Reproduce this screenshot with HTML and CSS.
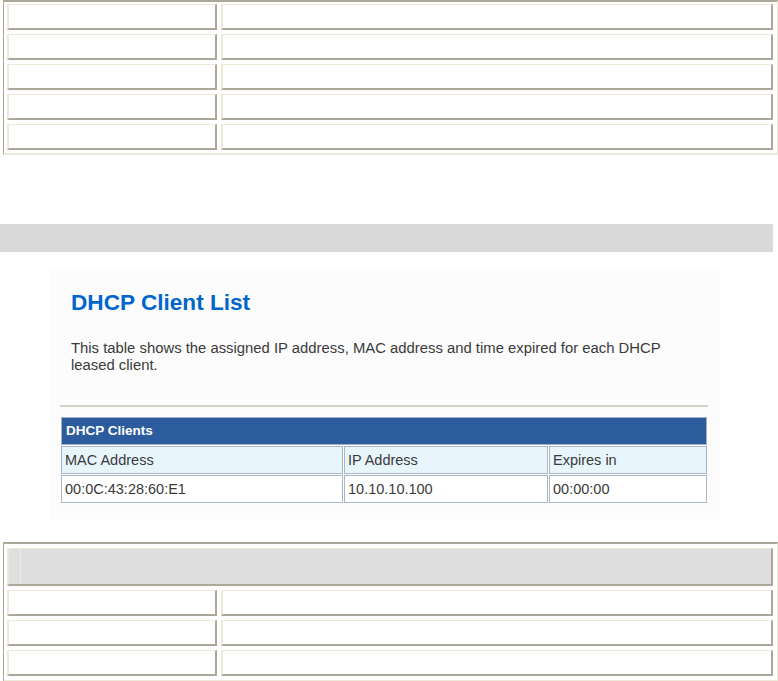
FILE: index.html
```html
<!DOCTYPE html>
<html>
<head>
<meta charset="utf-8">
<link rel="stylesheet" href="styles.css">
</head>
<body>
<div class="page">
  <div class="frame frame-top">
    <div class="cell"></div><div class="cell"></div>
    <div class="cell"></div><div class="cell"></div>
    <div class="cell"></div><div class="cell"></div>
    <div class="cell"></div><div class="cell"></div>
    <div class="cell"></div><div class="cell"></div>
  </div>

  <div class="bar"></div>

  <div class="shot">
    <h1 class="title">DHCP Client List</h1>
    <p class="desc">This table shows the assigned IP address, MAC address and time expired for each DHCP leased client.</p>
    <div class="rule"></div>
    <div class="clients">
      <div class="c-head">DHCP Clients</div>
      <div class="c-label">MAC Address</div>
      <div class="c-label">IP Address</div>
      <div class="c-label">Expires in</div>
      <div class="c-val">00:0C:43:28:60:E1</div>
      <div class="c-val">10.10.10.100</div>
      <div class="c-val">00:00:00</div>
    </div>
  </div>

  <div class="frame frame-bottom">
    <div class="cell head-cell"><span class="head-inner"></span></div>
    <div class="cell"></div><div class="cell"></div>
    <div class="cell"></div><div class="cell"></div>
    <div class="cell"></div><div class="cell"></div>
  </div>
</div>
</body>
</html>
```
FILE: styles.css
```css
html, body {
  margin: 0;
  padding: 0;
  background: #ffffff;
}
body {
  font-family: "Liberation Sans", Arial, sans-serif;
  color: #333333;
}
.page {
  width: 778px;
}
.frame {
  box-sizing: border-box;
  margin-left: 3px;
  width: 775px;
  border-top: 2px solid #aca899;
  border-left: 1px solid #aca899;
  border-right: 1px solid #ece9d8;
  border-bottom: 2px solid #ece9d8;
  display: grid;
  grid-template-columns: 210px 552px;
  grid-auto-rows: 26px;
  column-gap: 4px;
  row-gap: 4px;
}
.frame-top {
  padding: 2px 4px 3px 3px;
}
.frame-bottom {
  margin-top: 23px;
  padding: 4px 4px 4px 3px;
  grid-template-rows: 38px 26px 26px 26px;
}
.cell {
  box-sizing: border-box;
  background: #ffffff;
  border-top: 1px solid #ece9d8;
  border-left: 2px solid #ece9d8;
  border-right: 2px solid #aca899;
  border-bottom: 2px solid #aca899;
}
.head-cell {
  grid-column: 1 / 3;
  background: #dfdfdf;
  display: flex;
}
.head-inner {
  width: 11px;
  border-right: 1px solid #ececec;
}
.bar {
  margin-top: 69px;
  width: 773px;
  height: 28px;
  background: #d9d9d9;
}
.shot {
  box-sizing: border-box;
  margin-top: 18px;
  margin-left: 50px;
  width: 670px;
  height: 249px;
  background: #fcfcfc;
  padding: 20px 0 0 10px;
}
.title {
  margin: 0 0 0 11px;
  font-size: 22.6px;
  line-height: 26px;
  font-weight: bold;
  color: #0066cc;
}
.desc {
  margin: 24px 0 0 11px;
  width: 620px;
  font-size: 14.85px;
  line-height: 17px;
  color: #3a3a3a;
}
.rule {
  margin-top: 31px;
  width: 648px;
  height: 2px;
  background: #d4d0c2;
}
.clients {
  box-sizing: border-box;
  margin-top: 9px;
  width: 648px;
  padding: 1px;
  background: #ffffff;
  display: grid;
  grid-template-columns: 282px 204px 158px;
  grid-auto-rows: 28px;
  gap: 1px;
  font-size: 14.5px;
}
.c-head {
  grid-column: 1 / 4;
  box-sizing: border-box;
  background: #2c5c9d;
  color: #ffffff;
  font-weight: bold;
  font-size: 13.5px;
  line-height: 26px;
  padding-left: 4px;
  border: 1px solid #9fb0c6;
}
.c-label, .c-val {
  box-sizing: border-box;
  border: 1px solid #a9b6c6;
  padding-left: 3px;
  line-height: 26px;
  color: #3a3a3a;
}
.c-label {
  background: #e8f5fc;
}
.c-val {
  background: #ffffff;
}
```
